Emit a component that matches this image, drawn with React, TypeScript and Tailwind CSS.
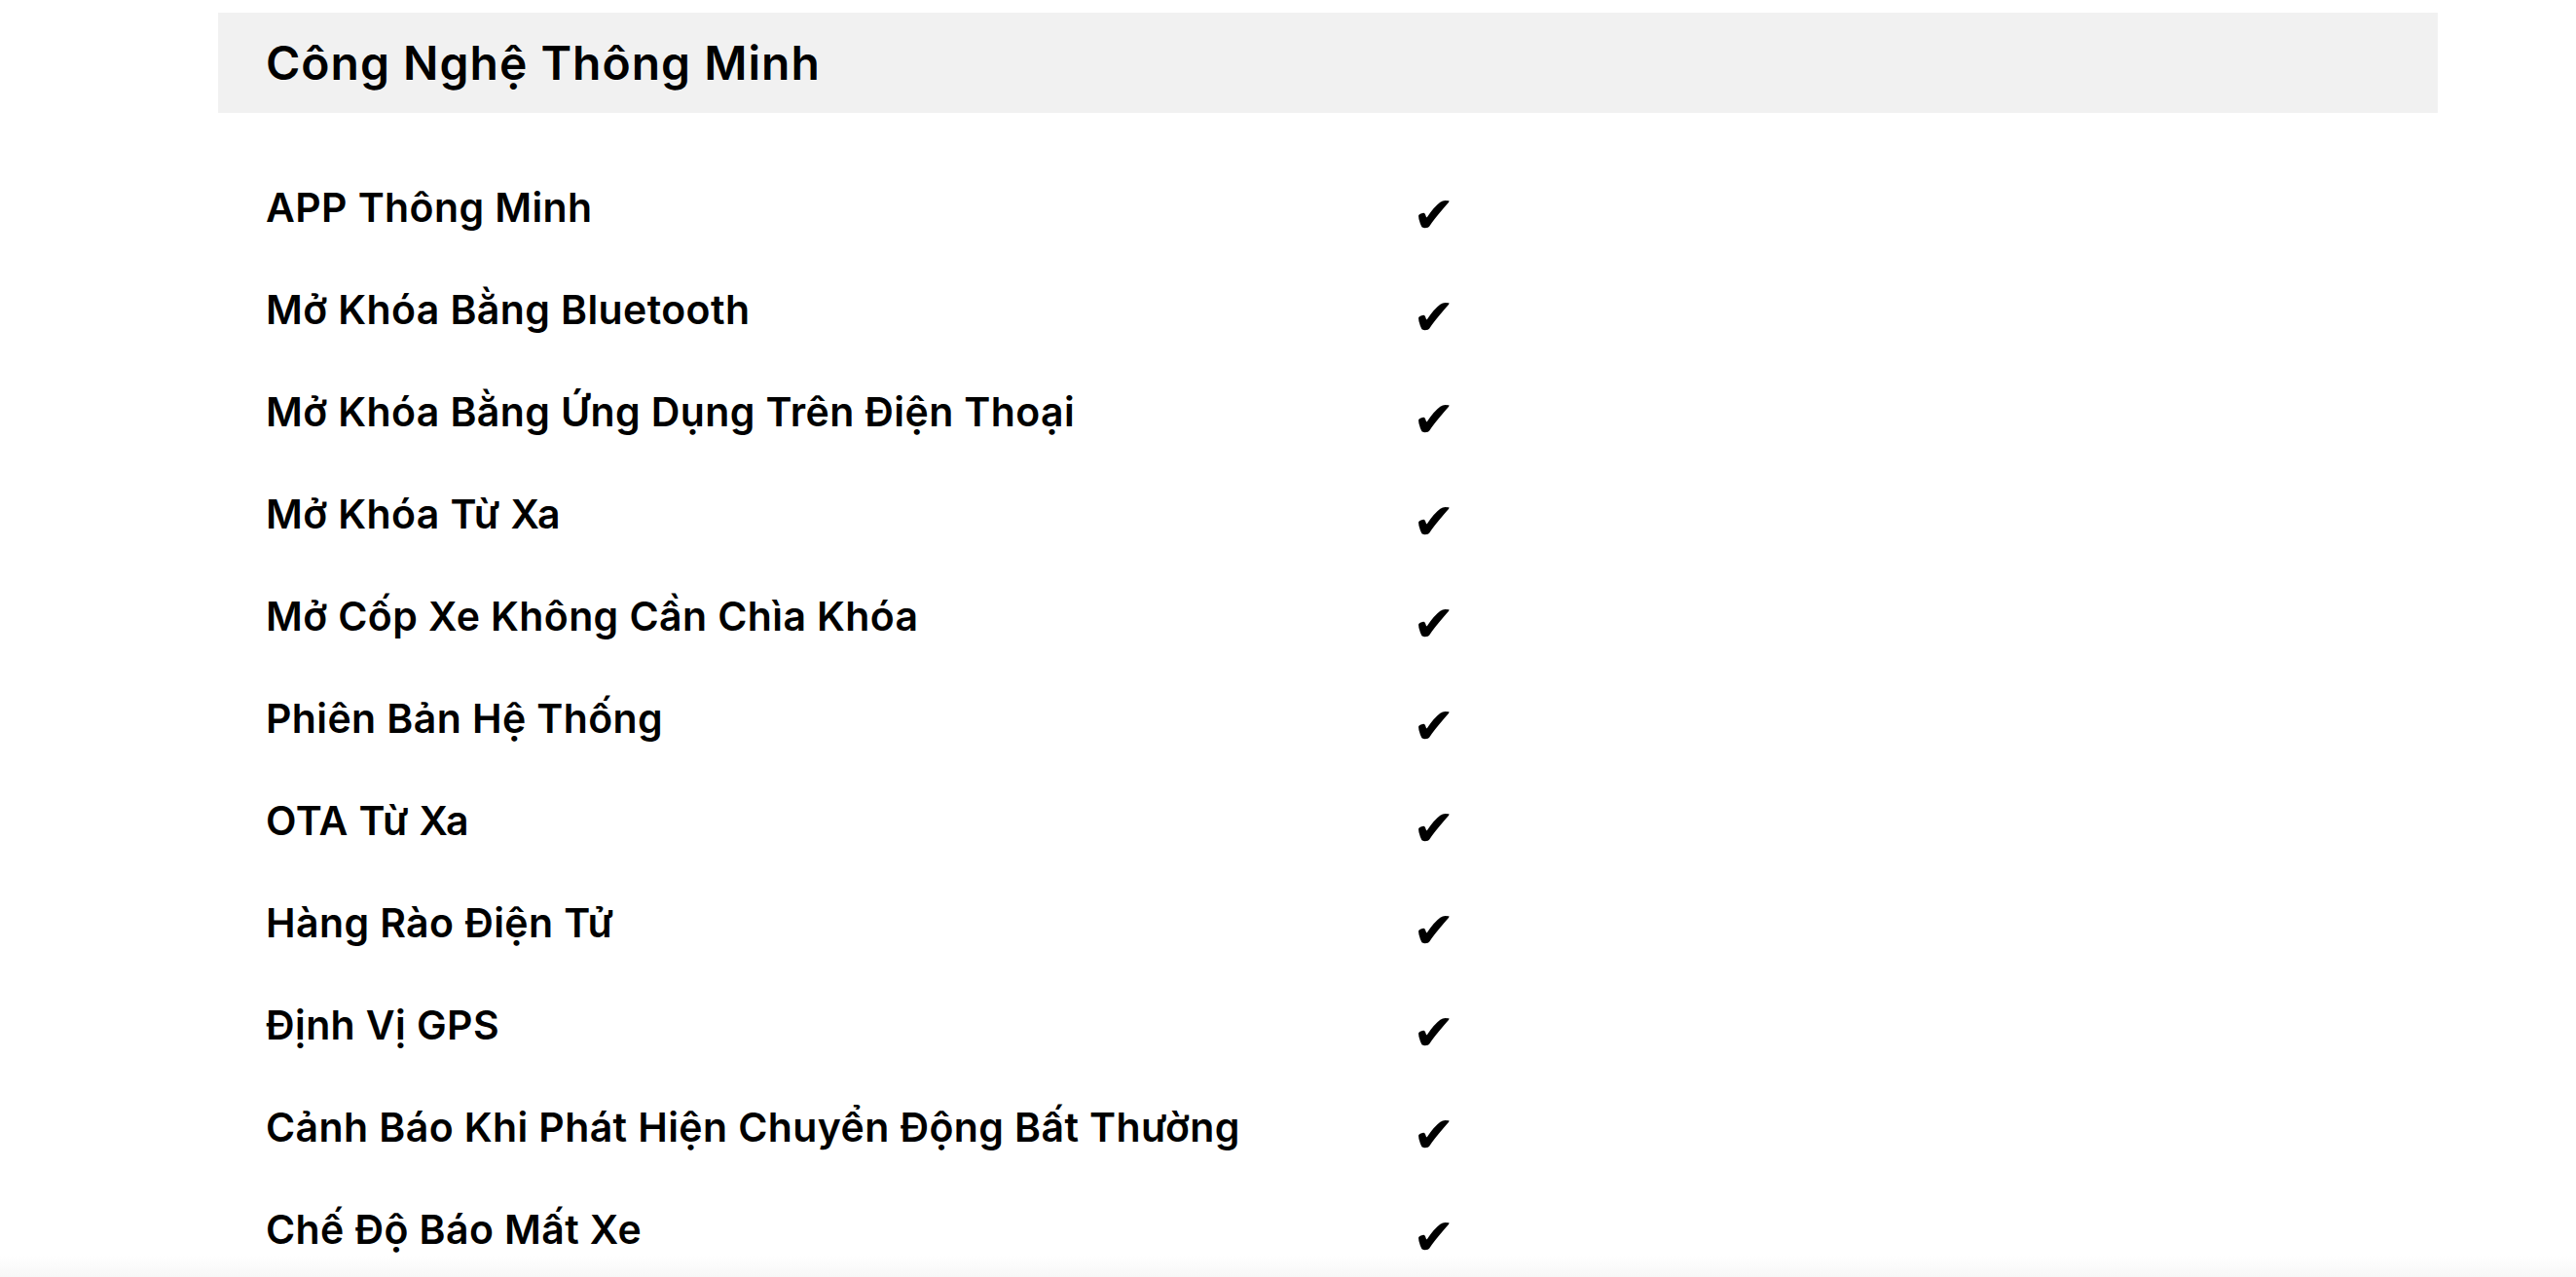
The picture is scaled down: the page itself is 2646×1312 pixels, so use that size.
import React from "react";

const items = [
  "APP Thông Minh",
  "Mở Khóa Bằng Bluetooth",
  "Mở Khóa Bằng Ứng Dụng Trên Điện Thoại",
  "Mở Khóa Từ Xa",
  "Mở Cốp Xe Không Cần Chìa Khóa",
  "Phiên Bản Hệ Thống",
  "OTA Từ Xa",
  "Hàng Rào Điện Tử",
  "Định Vị GPS",
  "Cảnh Báo Khi Phát Hiện Chuyển Động Bất Thường",
  "Chế Độ Báo Mất Xe",
];

export default function App() {
  return (
    <div className="relative w-[2646px] h-[1312px] overflow-hidden bg-white text-black" style={{ fontFamily: "Inter, 'Noto Sans', sans-serif" }}>
      <div className="ml-[224px] w-[2280px] pt-[13px]">
        <div className="h-[103px] bg-[#f1f1f1] flex items-center pl-[49px]">
          <h2 className="text-[48px] font-semibold tracking-[1px]">Công Nghệ Thông Minh</h2>
        </div>
        <div className="mt-[45px] pl-[49px]">
          {items.map((t) => (
            <div key={t} className="h-[105px] flex items-center">
              <div className="w-[1178px] text-[41px] font-semibold tracking-[0.4px]">{t}</div>
              <div className="pt-[14px] text-[52px] leading-none" style={{ fontFamily: "'DejaVu Sans', sans-serif" }}>✔</div>
            </div>
          ))}
        </div>
      </div>
      <div className="absolute left-0 right-0 bottom-0 h-[22px] bg-gradient-to-b from-white to-[#f7f7f7]" />
    </div>
  );
}
